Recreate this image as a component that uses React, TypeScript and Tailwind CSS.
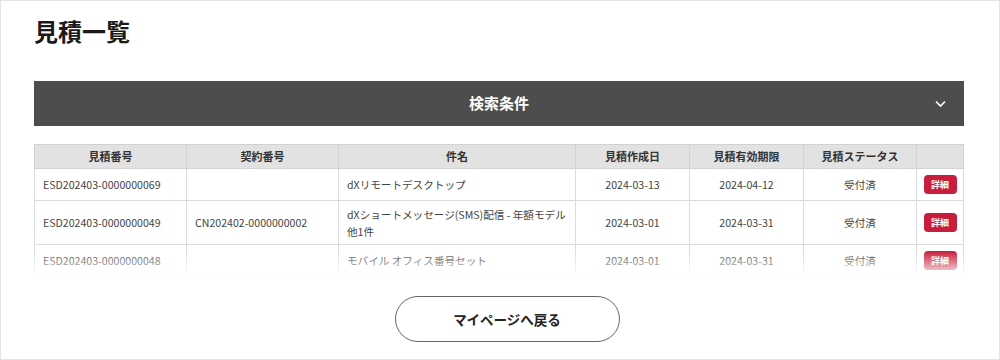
const rows = [
  {
    no: "ESD202403-0000000069",
    contract: "",
    title: ["dXリモートデスクトップ"],
    created: "2024-03-13",
    expires: "2024-04-12",
    status: "受付済",
  },
  {
    no: "ESD202403-0000000049",
    contract: "CN202402-0000000002",
    title: ["dXショートメッセージ(SMS)配信 - 年額モデル", "他1件"],
    created: "2024-03-01",
    expires: "2024-03-31",
    status: "受付済",
  },
  {
    no: "ESD202403-0000000048",
    contract: "",
    title: ["モバイル オフィス番号セット"],
    created: "2024-03-01",
    expires: "2024-03-31",
    status: "受付済",
  },
];

const headers = ["見積番号", "契約番号", "件名", "見積作成日", "見積有効期限", "見積ステータス", ""];

export default function App() {
  return (
    <div
      className="h-[360px] w-[1000px] border border-[#e4e4e4] bg-white pl-[33px] pr-[35px] pt-[12px] text-[#333]"
      style={{ fontFamily: '"Noto Sans CJK JP", "Noto Sans", sans-serif' }}
    >
      <h1 className="text-[24px] font-bold leading-[36px] text-[#1a1a1a]">見積一覧</h1>

      {/* search conditions */}
      <div className="relative mt-[32px] flex h-[45px] items-center justify-center bg-[#4d4d4d]">
        <span className="text-[15px] font-bold text-white">検索条件</span>
        <svg
          className="absolute right-[18px] top-1/2 -translate-y-1/2"
          width="11"
          height="7"
          viewBox="0 0 11 7"
          fill="none"
        >
          <polyline points="1,1 5.5,5.5 10,1" stroke="white" strokeWidth="1.6" />
        </svg>
      </div>

      <div className="relative mt-[18px] h-[133px]">
        <table className="w-full table-fixed border-collapse text-[10.6px] text-[#444]">
          <colgroup>
            <col className="w-[152px]" />
            <col className="w-[152px]" />
            <col className="w-[237px]" />
            <col className="w-[114px]" />
            <col className="w-[114px]" />
            <col className="w-[113px]" />
            <col />
          </colgroup>
          <thead>
            <tr className="h-[24px] bg-[#e2e2e2]">
              {headers.map((h, i) => (
                <th
                  key={i}
                  className="border border-[#d2d2d2] px-2 text-center text-[11px] font-bold text-[#333]"
                >
                  {h}
                </th>
              ))}
            </tr>
          </thead>
          <tbody>
            {rows.map((r) => (
              <tr key={r.no} className={r.title.length > 1 ? "h-[44px]" : "h-[32px]"}>
                <td className="border border-[#dcdcdc] px-2">{r.no}</td>
                <td className="border border-[#dcdcdc] px-2">{r.contract}</td>
                <td className="border border-[#dcdcdc] px-2 leading-[17px]">
                  {r.title.map((t) => (
                    <div key={t} className="whitespace-nowrap">
                      {t}
                    </div>
                  ))}
                </td>
                <td className="border border-[#dcdcdc] text-center">{r.created}</td>
                <td className="border border-[#dcdcdc] text-center">{r.expires}</td>
                <td className="border border-[#dcdcdc] text-center">{r.status}</td>
                <td className="border border-[#dcdcdc] text-center">
                  <button className="inline-flex h-[19px] w-[33px] items-center justify-center rounded-[4px] bg-[#c81e3e] text-[9px] font-bold text-white">
                    詳細
                  </button>
                </td>
              </tr>
            ))}
          </tbody>
        </table>
        {/* fade out */}
        <div className="pointer-events-none absolute -bottom-px -left-px -right-px h-[27px] bg-gradient-to-b from-white/0 to-white" />
      </div>

      <div className="mt-[19px] flex justify-center pl-[16px]">
        <button className="h-[46px] w-[225px] rounded-full border border-[#666] bg-white text-[13.5px] font-bold text-[#222]">
          マイページへ戻る
        </button>
      </div>
    </div>
  );
}
